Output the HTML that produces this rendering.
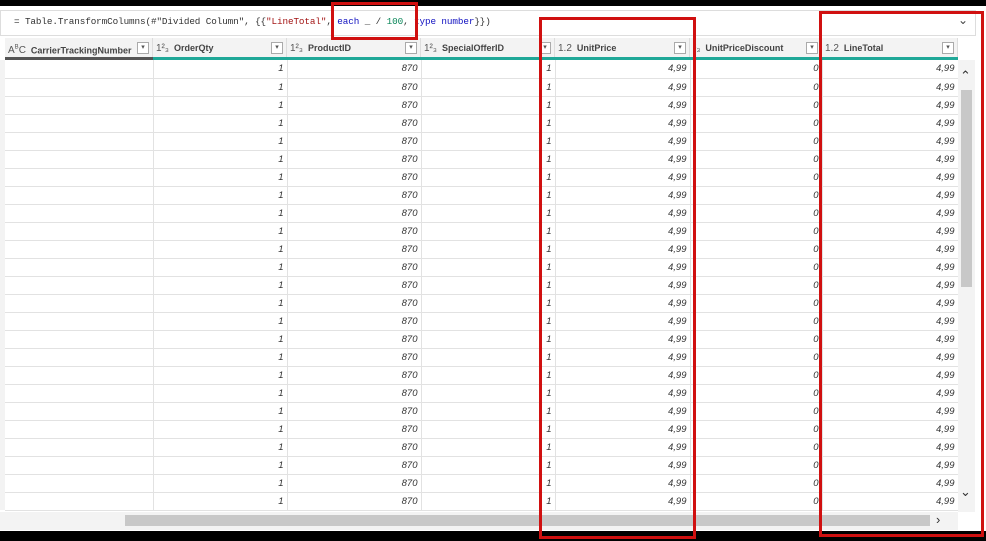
<!DOCTYPE html>
<html><head><style>
body{margin:0;width:986px;height:541px;overflow:hidden;background:#fff;position:relative;font-family:"Liberation Sans",sans-serif;}
.a{position:absolute;}
.fb{left:0;top:10px;width:976px;height:26px;background:#fff;border:1px solid #ddd;box-sizing:border-box;}
.ft{left:14px;top:16px;font-family:"Liberation Mono",monospace;font-size:9.3px;color:#333;white-space:pre;letter-spacing:-0.1px}
.hd{top:38px;height:20px;font-size:9px;font-weight:bold;color:#444;line-height:20px;box-sizing:border-box;border-right:1px solid #ddd;background:#f3f3f3;white-space:nowrap;overflow:hidden}
.dd{position:absolute;right:3px;top:4px;width:10px;height:10px;border:1px solid #aaa;background:#fff;font-size:7px;line-height:10px;text-align:center;color:#555;font-weight:normal}
.ty{color:#555;font-weight:normal;font-size:10px;margin:0 5px 0 3px}
.rb{border:3px solid #d01010;box-sizing:border-box}
td{height:18px;border-bottom:1px solid #e2e2e2;border-right:1px solid #e2e2e2;font-size:9.5px;font-style:italic;color:#333;text-align:right;padding:0 3px 0 0;box-sizing:border-box}
table{border-collapse:collapse;table-layout:fixed}
</style></head><body>
<div class="a" style="left:0;top:0;width:986px;height:6px;background:#000"></div>
<div class="a fb"></div>
<div class="a ft">= Table.TransformColumns(#"Divided Column", {{<span style="color:#a31515">"LineTotal"</span>, <span style="color:#1010c0">each</span> _ / <span style="color:#098658">100</span>, <span style="color:#1010c0">type number</span>}})</div>
<div class="a" style="left:958px;top:13px;font-size:12px;color:#444">&#8964;</div>

<div class="a hd" style="left:5px;width:148px"><span class="ty">A<sup style="font-size:6px">B</sup>C</span>CarrierTrackingNumber<div class="dd">▾</div></div>
<div class="a hd" style="left:153px;width:134px"><span class="ty">1²₃</span>OrderQty<div class="dd">▾</div></div>
<div class="a hd" style="left:287px;width:134px"><span class="ty">1²₃</span>ProductID<div class="dd">▾</div></div>
<div class="a hd" style="left:421px;width:134px"><span class="ty">1²₃</span>SpecialOfferID<div class="dd">▾</div></div>
<div class="a hd" style="left:555px;width:135px"><span class="ty">1.2</span>UnitPrice<div class="dd">▾</div></div>
<div class="a hd" style="left:690px;width:132px"><span class="ty">²₃</span>UnitPriceDiscount<div class="dd">▾</div></div>
<div class="a hd" style="left:822px;width:136px"><span class="ty">1.2</span>LineTotal<div class="dd">▾</div></div>
<div class="a" style="left:5px;top:57px;width:148px;height:3px;background:#555"></div>
<div class="a" style="left:153px;top:57px;width:805px;height:3px;background:#20a898"></div>

<div class="a" style="left:5px;top:60px">
<table id="t"></table>
</div>
<div class="a" style="left:0;top:60px;width:5px;height:450px;background:#f3f3f3"></div>
<div class="a" style="left:958px;top:60px;width:17px;height:452px;background:#f3f3f3"></div>
<div class="a" style="left:961px;top:90px;width:11px;height:197px;background:#c8c8c8"></div>
<div class="a" style="left:960px;top:68px;font-size:13px;color:#333">&#8963;</div>
<div class="a" style="left:960px;top:484px;font-size:13px;color:#333">&#8964;</div>
<div class="a" style="left:0;top:512px;width:958px;height:18px;background:#f3f3f3"></div>
<div class="a" style="left:125px;top:515px;width:805px;height:11px;background:#c8c8c8"></div>
<div class="a" style="left:936px;top:512px;font-size:13px;color:#333">&#8250;</div>
<div class="a" style="left:0;top:531px;width:986px;height:10px;background:#000"></div>

<div class="a rb" style="left:331px;top:2px;width:87px;height:38px"></div>
<div class="a rb" style="left:539px;top:17px;width:157px;height:522px"></div>
<div class="a rb" style="left:819px;top:11px;width:165px;height:526px"></div>
<script>
var w=[148,134,134,134,135,132,136],v=['','1','870','1','4,99','0','4,99'],h='<colgroup>'+w.map(x=>'<col style="width:'+x+'px">').join('')+'</colgroup>';
for(var i=0;i<25;i++){h+='<tr>'+v.map(x=>'<td>'+x+'</td>').join('')+'</tr>';}
document.getElementById('t').innerHTML=h;document.getElementById('t').style.width='953px';
</script>
</body></html>
